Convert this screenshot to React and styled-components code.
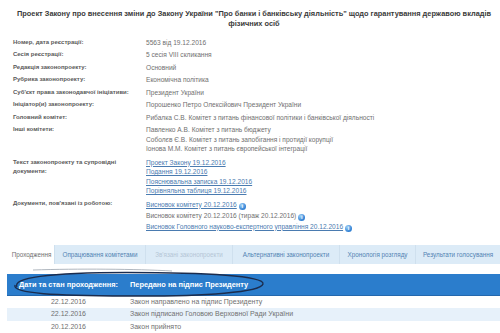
import React from 'react';
import styled, {createGlobalStyle} from 'styled-components';

const GlobalStyle = createGlobalStyle`
  body {
    margin: 0;
    background: #fff;
    font-family: "Liberation Sans", Arial, sans-serif;
  }
`;

const Page = styled.div`
  width: 492px;
  padding: 9px 0 0 8px;
  overflow: hidden;
  height: 324px;
`;

const Title = styled.h1`
  margin: 0;
  font-size: 7.4px;
  line-height: 10px;
  font-weight: bold;
  color: #3a3a3a;
  text-align: center;
  white-space: nowrap;
`;

const Info = styled.div`
  margin-top: 7px;
  padding-left: 5px;
`;

const Row = styled.div`
  display: grid;
  grid-template-columns: 133px 1fr;
  padding: 1.5px 0;
  font-size: 6.6px;
  line-height: ${p => p.$line || '9.5px'};
  margin-top: ${p => p.$gap || '0'};
`;

const Label = styled.div`
  color: #5a5a5a;
  font-weight: bold;
  font-size: 6px;
  line-height: 9.5px;
  white-space: nowrap;
`;

const Value = styled.div`
  color: #707070;
  white-space: nowrap;
`;

const Link = styled.a`
  color: #4a7bb0;
  text-decoration: underline;
`;

const InfoIcon = styled.span`
  display: inline-block;
  width: 7px;
  height: 7px;
  margin-left: 2px;
  border-radius: 50%;
  background: radial-gradient(circle at 35% 30%, #9fd0f7, #2f7fd3 70%);
  color: #fff;
  font-size: 5.5px;
  line-height: 7px;
  font-weight: bold;
  text-align: center;
  vertical-align: -1px;
`;

const Tabs = styled.div`
  display: flex;
  height: 19px;
  margin-top: 12px;
  font-size: 6.3px;
`;

const Tab = styled.div`
  display: flex;
  align-items: center;
  justify-content: center;
  box-sizing: border-box;
  width: ${p => p.$w || 'auto'};
  white-space: nowrap;
  overflow: hidden;
  background: ${p => (p.$active ? '#fff' : '#dcebf7')};
  color: ${p => (p.$active ? '#707070' : p.$disabled ? '#b5c6d6' : '#5283b3')};
  border-left: 1px solid ${p => (p.$active ? '#fff' : '#cfe0ee')};
  flex: ${p => (p.$w ? 'none' : '1')};
`;

const Passage = styled.div`
  position: relative;
  margin-top: 10px;
  margin-left: -1px;
`;

const Header = styled.div`
  display: grid;
  grid-template-columns: 123px 1fr;
  align-items: center;
  height: 21px;
  background: #2b7dcc;
  border-bottom: 1px solid #2468ad;
  color: #fff;
  font-weight: bold;
  font-size: 7.4px;
`;

const HeaderCell = styled.div`
  text-align: ${p => (p.$center ? 'center' : 'left')};
  white-space: nowrap;
`;

const StepRow = styled.div`
  display: grid;
  grid-template-columns: 123px 1fr;
  height: 12.4px;
  line-height: 12.4px;
  font-size: 7px;
  color: #707070;
  background: ${p => (p.$alt ? '#e7f1fa' : '#fff')};
`;

const DateCell = styled.div`
  text-align: center;
`;

const StepCell = styled.div`
  white-space: nowrap;
`;

const Scribble = styled.svg`
  position: absolute;
  left: 0;
  top: -7px;
  width: 262px;
  height: 34px;
  pointer-events: none;
`;

const rows = [
  ['Номер, дата реєстрації:', '5563 від 19.12.2016'],
  ['Сесія реєстрації:', '5 сесія VIII скликання'],
  ['Редакція законопроекту:', 'Основний'],
  ['Рубрика законопроекту:', 'Економічна політика'],
  ["Суб'єкт права законодавчої ініціативи:", 'Президент України'],
  ['Ініціатор(и) законопроекту:', 'Порошенко Петро Олексійович Президент України'],
  ['Головний комітет:', 'Рибалка С.В. Комітет з питань фінансової політики і банківської діяльності'],
];

const committees = [
  'Павленко А.В. Комітет з питань бюджету',
  'Соболєв Є.В. Комітет з питань запобігання і протидії корупції',
  'Іонова М.М. Комітет з питань європейської інтеграції',
];

const texts = [
  'Проект Закону 19.12.2016',
  'Подання 19.12.2016',
  'Пояснювальна записка 19.12.2016',
  'Порівняльна таблиця 19.12.2016',
];

const tabs = [
  {title: 'Проходження', w: '46px', active: true},
  {title: 'Опрацювання комітетами', w: '91px'},
  {title: "Зв'язані законопроекти", w: '87px', disabled: true},
  {title: 'Альтернативні законопроекти', w: '107px'},
  {title: 'Хронологія розгляду', w: '76px'},
  {title: 'Результати голосування'},
];

const steps = [
  ['22.12.2016', 'Закон направлено на підпис Президенту'],
  ['22.12.2016', 'Закон підписано Головою Верховної Ради України'],
  ['20.12.2016', 'Закон прийнято'],
];

const App = () => (
  <Page>
    <GlobalStyle />
    <Title>
      Проект Закону про внесення зміни до Закону України "Про банки і банківську діяльність" щодо гарантування державою вкладів
      <br />
      фізичних осіб
    </Title>

    <Info>
      {rows.map(([label, value]) => (
        <Row key={label}>
          <Label>{label}</Label>
          <Value>{value}</Value>
        </Row>
      ))}
      <Row>
        <Label>Інші комітети:</Label>
        <Value>
          {committees.map(c => <div key={c}>{c}</div>)}
        </Value>
      </Row>
      <Row $gap="1px">
        <Label>Текст законопроекту та супровідні<br />документи:</Label>
        <Value>
          {texts.map(t => <div key={t}><Link>{t}</Link></div>)}
        </Value>
      </Row>
      <Row $line="11px">
        <Label>Документи, пов'язані із роботою:</Label>
        <Value>
          <div><Link>Висновок комітету 20.12.2016</Link><InfoIcon>i</InfoIcon></div>
          <div>Висновок комітету 20.12.2016 (тираж 20.12.2016)<InfoIcon>i</InfoIcon></div>
          <div><Link>Висновок Головного науково-експертного управління 20.12.2016</Link><InfoIcon>i</InfoIcon></div>
        </Value>
      </Row>
    </Info>

    <Tabs>
      {tabs.map(t => (
        <Tab key={t.title} $w={t.w} $active={t.active} $disabled={t.disabled}>
          {t.title}
        </Tab>
      ))}
    </Tabs>

    <Passage>
      <Header>
        <HeaderCell $center>Дати та стан проходження:</HeaderCell>
        <HeaderCell>Передано на підпис Президенту</HeaderCell>
      </Header>
      {steps.map(([date, text], i) => (
        <StepRow key={text} $alt={i === 1}>
          <DateCell>{date}</DateCell>
          <StepCell>{text}</StepCell>
        </StepRow>
      ))}
      <Scribble viewBox="0 0 262 34">
        <path d="M26 3 C70 1.5 130 2 165 4" fill="none" stroke="#9aa3ad" strokeWidth="0.8" />
        <path
          d="M10 20 C5 11 40 5.5 120 5.5 C200 5.5 258 9 256 17 C254 25 200 29.5 120 29 C50 28.5 5 27 8 18"
          fill="none"
          stroke="#1b2c4d"
          strokeWidth="1.4"
        />
      </Scribble>
    </Passage>
  </Page>
);

export default App;
